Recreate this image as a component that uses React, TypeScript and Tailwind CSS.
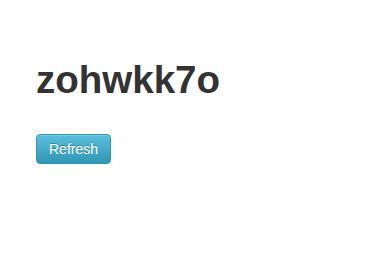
export default function App() {
  return (
    <div
      className="min-h-screen bg-white px-[36px] pt-[50px] text-[#333333]"
      style={{ fontFamily: '"Liberation Sans", Arial, sans-serif' }}
    >
      <h1 className="my-[10px] text-[38.5px] font-bold leading-[40px]">zohwkk7o</h1>
      <button
        type="button"
        className="mt-[24px] rounded-[4px] border border-[#2f96b4] bg-gradient-to-b from-[#5bc0de] to-[#2f96b4] px-[12px] py-[4px] text-[14px] leading-[20px] text-white shadow-[inset_0_1px_0_rgba(255,255,255,0.2),0_1px_2px_rgba(0,0,0,0.05)] [text-shadow:0_-1px_0_rgba(0,0,0,0.25)]"
      >
        Refresh
      </button>
    </div>
  );
}
